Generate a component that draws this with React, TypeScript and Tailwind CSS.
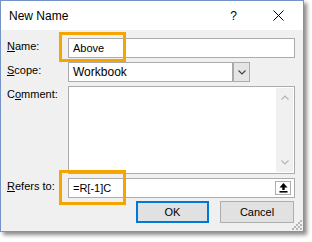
import type { ReactNode } from "react";

const fieldClass = "border border-[#acacac] bg-white";

function Label({ children }: { children: ReactNode }) {
  return <div className="w-[61px] shrink-0 pt-[1px] text-[11px] leading-[14px] text-[#000]">{children}</div>;
}

function Chevron({ up, className }: { up?: boolean; className?: string }) {
  return (
    <svg width="8" height="5" viewBox="0 0 8 5" className={className}>
      <path d={up ? "M0.5 4.5 L4 1 L7.5 4.5" : "M0.5 0.5 L4 4 L7.5 0.5"} fill="none" stroke="currentColor" strokeWidth="1.2" />
    </svg>
  );
}

export default function App() {
  return (
    <div className="h-[242px] w-[312px] bg-white font-['Liberation_Sans',Arial,sans-serif] text-[12px] text-black">
      <div className="relative flex h-[232px] w-[304px] flex-col border border-[#7493c6] bg-[#f0f0f0] shadow-[3px_3px_4px_rgba(0,0,0,0.45)]">
        {/* title bar */}
        <div className="flex h-[29px] shrink-0 items-center bg-white pl-[8px]">
          <span className="leading-none">New Name</span>
          <span className="ml-auto mr-[36px] leading-none">?</span>
          <svg width="11" height="11" viewBox="0 0 11 11" className="mr-[19px]">
            <path d="M0.5 0.5 L10.5 10.5 M10.5 0.5 L0.5 10.5" stroke="#000" strokeWidth="1" />
          </svg>
        </div>

        {/* body */}
        <div className="flex flex-col gap-[4px] pl-[6px] pr-[8px] pt-[8px] text-[11px]">
          <div className="flex h-[20px]">
            <Label>
              <u>N</u>ame:
            </Label>
            <div className={`${fieldClass} flex flex-1 items-center pl-[4px]`}>Above</div>
          </div>

          <div className="flex h-[20px]">
            <Label>
              <u>S</u>cope:
            </Label>
            <div className={`${fieldClass} flex w-[182px] items-center`}>
              <span className="flex-1 pl-[4px] text-[12px]">Workbook</span>
              <div className="flex h-full w-[17px] items-center justify-center border-l-2 border-[#a9a9a9] bg-[#e5e5e5] text-[#444]">
                <Chevron />
              </div>
            </div>
          </div>

          <div className="flex h-[88px]">
            <Label>
              C<u>o</u>mment:
            </Label>
            <div className={`${fieldClass} flex flex-1 justify-end p-[1px]`}>
              <div className="flex w-[17px] flex-col items-center justify-between bg-[#f0f0f0] py-[7px] text-[#b4b4b4]">
                <Chevron up />
                <Chevron />
              </div>
            </div>
          </div>

          <div className="flex h-[20px]">
            <Label>
              <u>R</u>efers to:
            </Label>
            <div className={`${fieldClass} flex flex-1 items-center pl-[4px]`}>
              <span className="flex-1">=R[-1]C</span>
              <div className="mr-[3px] flex h-[14px] w-[16px] items-center justify-center border border-[#adadad] bg-white">
                <svg width="9" height="10" viewBox="0 0 9 10">
                  <path d="M4.5 0 L0.5 4.5 H3.3 V7 H5.7 V4.5 H8.5 Z" fill="#000" />
                  <rect x="0.5" y="8" width="8" height="1.6" fill="#000" />
                </svg>
              </div>
            </div>
          </div>

          <div className="mt-[-1px] flex justify-end gap-[11px] pr-[1px]">
            <button className="flex h-[22px] w-[73px] items-center justify-center border-2 border-[#0078d7] bg-[#e1e1e1]">OK</button>
            <button className="flex h-[22px] w-[74px] items-center justify-center border border-[#adadad] bg-[#e1e1e1]">Cancel</button>
          </div>
        </div>

        {/* orange highlights */}
        <div className="pointer-events-none absolute left-[58px] top-[31px] h-[30px] w-[67px] border-[3px] border-[#f5a400]" />
        <div className="pointer-events-none absolute left-[58px] top-[169px] h-[35px] w-[67px] border-[3px] border-[#f5a400]" />

        {/* resize grip */}
        <svg width="10" height="10" viewBox="0 0 10 10" className="absolute bottom-[1px] right-[1px]">
          <g fill="#b8b8b8">
            <rect x="8" y="0" width="2" height="2" />
            <rect x="6" y="2" width="2" height="2" />
            <rect x="8" y="4" width="2" height="2" />
            <rect x="4" y="4" width="2" height="2" />
            <rect x="2" y="6" width="2" height="2" />
            <rect x="6" y="6" width="2" height="2" />
            <rect x="0" y="8" width="2" height="2" />
            <rect x="4" y="8" width="2" height="2" />
            <rect x="8" y="8" width="2" height="2" />
          </g>
        </svg>
      </div>
    </div>
  );
}
